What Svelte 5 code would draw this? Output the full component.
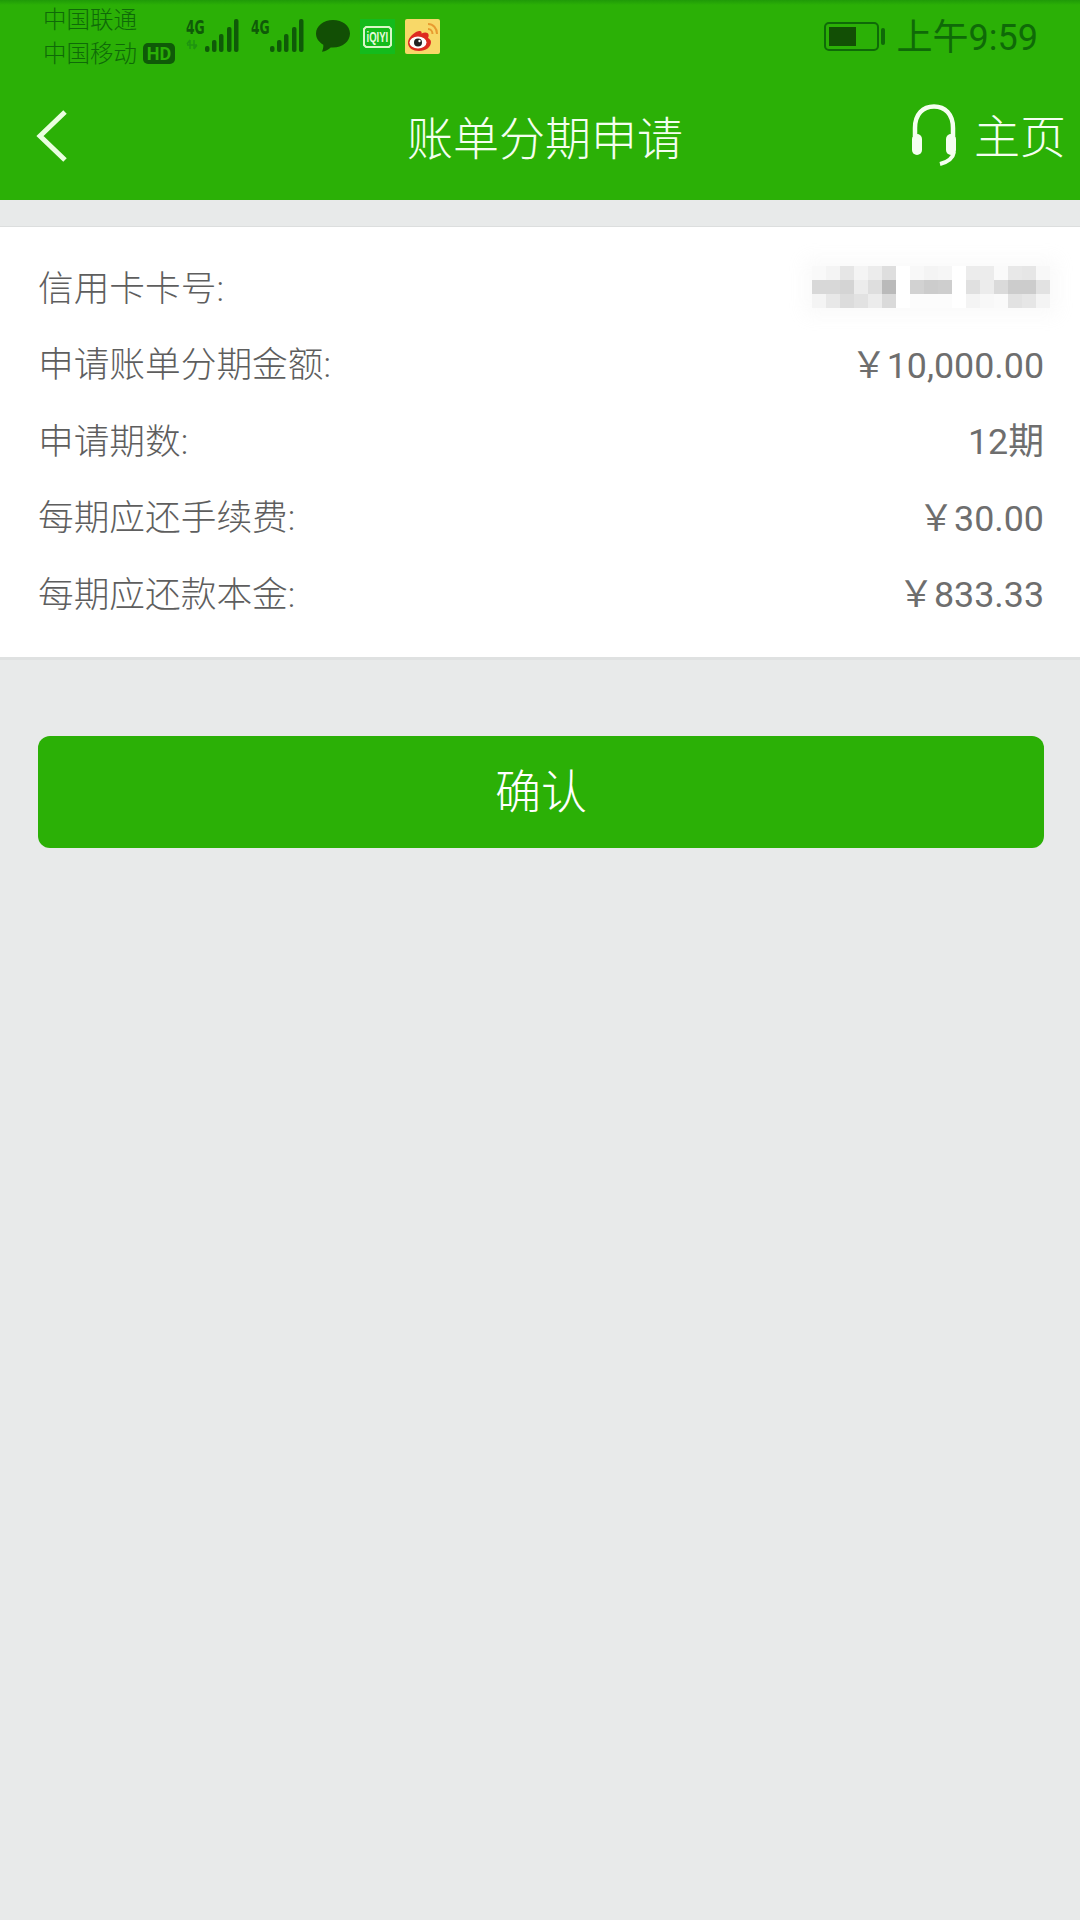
<script lang="ts">
  const rows = [
    { label: "申请账单分期金额:", value: "￥10,000.00" },
    { label: "申请期数:", value: "12期" },
    { label: "每期应还手续费:", value: "￥30.00" },
    { label: "每期应还款本金:", value: "￥833.33" },
  ];

  // pixelated card number, one list per block, grey levels per cell
  const blur = [
    [
      [249, 244, 230, 244, 236, 222],
      [216, 216, 212, 236, 222, 186],
      [244, 232, 220, 226, 236, 218],
    ],
    [
      [248, 244, 246],
      [210, 204, 206],
      [252, 252, 252],
    ],
    [
      [236, 236, 250, 232, 230, 248],
      [224, 236, 218, 204, 204, 226],
      [244, 248, 250, 226, 230, 244],
    ],
  ];
  const grey = (v: number) => `rgb(${v},${v},${v})`;

  // signal strength bars: x, top
  const bars = [
    [19, 28],
    [26, 22],
    [33, 16],
    [41, 9],
    [48, 1],
  ];
</script>

<div class="page">
  <header class="header">
    <div class="status">
      <div class="carriers">
        <span>中国联通</span>
        <span>中国移动</span>
      </div>
      <span class="hd">HD</span>
      <svg class="signal first" viewBox="0 0 54 36" width="54" height="36">
        <text transform="translate(0 16) scale(.72 1)" class="g4">4G</text>
        <path d="M1 27h10M4 22v9M8 22v9M4 22l-3 4M8 31l3-4" class="updown" />
        {#each bars as [x, top]}
          <rect {x} y={top} width="4.500" height={34 - top} rx="2" class="bar" />
        {/each}
      </svg>
      <svg class="signal second" viewBox="0 0 54 36" width="54" height="36">
        <text transform="translate(0 16) scale(.72 1)" class="g4">4G</text>
        {#each bars as [x, top]}
          <rect {x} y={top} width="4.500" height={34 - top} rx="2" class="bar" />
        {/each}
      </svg>
      <svg class="chat" viewBox="0 0 34 33" width="34" height="33">
        <path d="M17 0C7.600 0 0 5.900 0 13.500c0 4.700 2.900 8.800 7.300 11.200.3 2.600-.6 5.100-1.300 7 3.400-.4 6.500-2 8.700-4.300.8.100 1.500.1 2.300.1 9.400 0 17-6.100 17-14S26.400 0 17 0z" />
      </svg>
      <div class="app">
        <svg viewBox="0 0 35 35" width="35" height="35">
          <rect width="35" height="35" fill="#14bb1c" />
          <path d="M6 8h23l2 2v16l-2 2H6l-2-2V10z" fill="none" stroke="#d8f7c8" stroke-width="2" />
          <text transform="translate(6.500 23) scale(.68 1)" class="qiyi">iQIYI</text>
        </svg>
      </div>
      <div class="app">
        <svg viewBox="0 0 35 35" width="35" height="35">
          <rect width="35" height="35" rx="2" fill="#f8d868" />
          <path d="M11 13C6 16 3 20 3 24c0 5 5 8 11 8 7 0 12-4 12-9 0-2-2-3.500-3-4 1-2 1-4-.5-5-1.500-1-4-.5-6 .5.500-2-.5-3.500-5.500-1.500z" fill="#de2b20" />
          <ellipse cx="13" cy="23.500" rx="8.500" ry="6" fill="#fff" />
          <circle cx="13" cy="23.500" r="4" fill="#222" />
          <circle cx="14.500" cy="22" r="1.200" fill="#fff" />
          <path d="M23 5c5 0 9 4 9 10M23 10c2.500 0 4.500 2 4.500 5" fill="none" stroke="#e89a30" stroke-width="2" />
        </svg>
      </div>
      <div class="spacer"></div>
      <div class="battery">
        <div class="cell"><div class="level"></div></div>
        <div class="tip"></div>
      </div>
      <span class="time">上午9:59</span>
    </div>

    <nav class="nav">
      <svg class="back" viewBox="0 0 34 56" width="34" height="56">
        <path d="M30 4L5 28l25 24" />
      </svg>
      <h1>账单分期申请</h1>
      <div class="home">
        <svg viewBox="0 0 46 62" width="46" height="62">
          <path d="M4 32V24C4 10 12 2.500 23 2.500S42 10 42 24v8" class="band" />
          <rect x="1" y="30" width="10" height="21" rx="5" />
          <rect x="35" y="30" width="10" height="21" rx="5" />
          <path d="M43 48c-1 6-6 10-14 12" class="band mic" />
        </svg>
        <span>主页</span>
      </div>
    </nav>
  </header>

  <section class="card">
    <div class="row">
      <span>信用卡卡号:</span>
      <div class="mosaic">
        {#each blur as block}
          <div class="block">
            {#each block as line}
              <div class="line">
                {#each line as v}
                  <i style="background:{grey(v)}"></i>
                {/each}
              </div>
            {/each}
          </div>
        {/each}
      </div>
    </div>
    {#each rows as row}
      <div class="row">
        <span>{row.label}</span>
        <span class="value">{row.value}</span>
      </div>
    {/each}
  </section>

  <button class="confirm">确认</button>
</div>

<style>
  :global(body) {
    margin: 0;
    background: #e8eaea;
  }
  .page {
    height: 1920px;
    background: #e8eaea;
    font-family: Roboto, "Noto Sans CJK SC", sans-serif;
    font-weight: 300;
    overflow: hidden;
  }
  .header {
    height: 200px;
    background: #2bb006;
  }
  .status {
    height: 72px;
    display: flex;
    align-items: center;
    padding: 0 42px 0 43px;
    color: #0f6a08;
    background: linear-gradient(#1f9a08, #2bb006 5px);
  }
  .carriers {
    display: flex;
    flex-direction: column;
    font-size: 23.500px;
    line-height: 34px;
    padding-top: 2px;
  }
  .hd {
    align-self: flex-end;
    margin: 0 0 8px 6px;
    width: 32px;
    height: 21px;
    border-radius: 5px;
    background: #0f5a08;
    color: #2bb006;
    font-size: 18px;
    line-height: 21px;
    font-weight: 700;
    text-align: center;
  }
  .signal {
    flex: none;
  }
  .first {
    margin-left: 11px;
  }
  .second {
    margin-left: 11px;
  }
  .g4 {
    font: 700 19px "DejaVu Sans Condensed", "DejaVu Sans", sans-serif;
    fill: #0f5a08;
  }
  .updown {
    fill: none;
    stroke: #1f9410;
    stroke-width: 1.500;
  }
  .bar {
    fill: #0f5a08;
  }
  .chat {
    margin-left: 11px;
    fill: #124f05;
    flex: none;
  }
  .app {
    margin-left: 10px;
    width: 35px;
    height: 35px;
    flex: none;
    display: flex;
  }
  .qiyi {
    font: 700 14px "Liberation Sans", sans-serif;
    fill: #e6fadc;
  }
  .spacer {
    flex: 1;
  }
  .battery {
    display: flex;
    align-items: center;
    gap: 2px;
    margin-right: 12px;
  }
  .cell {
    box-sizing: border-box;
    width: 55px;
    height: 29px;
    border: 2px solid #0f6a08;
    border-radius: 5px;
    padding: 3px;
  }
  .level {
    width: 27px;
    height: 100%;
    background: #124f05;
  }
  .tip {
    width: 4px;
    height: 17px;
    border-radius: 2px;
    background: #0f6a08;
  }
  .time {
    font-size: 36px;
    line-height: 40px;
    margin-top: 3px;
    font-weight: 400;
  }
  .nav {
    height: 128px;
    position: relative;
    display: flex;
    align-items: center;
    justify-content: space-between;
    padding: 0 14px 0 35px;
    color: #f4fff0;
  }
  .back {
    fill: none;
    stroke: #eaffe0;
    stroke-width: 5;
  }
  .nav h1 {
    margin: 0;
    position: absolute;
    left: 0;
    right: 0;
    top: 38px;
    text-align: center;
    font-size: 46px;
    line-height: 58px;
    font-weight: 300;
    transform: translateX(5px);
  }
  .home {
    display: flex;
    align-items: center;
    gap: 15px;
    font-size: 46px;
    line-height: 56px;
  }
  .home span {
    margin-top: 2px;
  }
  .home svg {
    fill: #f5fff0;
    margin: -2px 2px 0 -2px;
  }
  .band {
    fill: none;
    stroke: #f5fff0;
    stroke-width: 4.500;
  }
  .mic {
    stroke-width: 4;
  }
  .card {
    margin-top: 26px;
    height: 434px;
    box-sizing: border-box;
    padding-top: 20px;
    background: #fff;
    border-top: 1px solid #dcdede;
    border-bottom: 3px solid #dfe1e1;
  }
  .row {
    height: 76.500px;
    display: flex;
    align-items: center;
    justify-content: space-between;
    padding: 0 36px 0 38px;
    font-size: 35.700px;
    color: #5e5e5e;
  }
  .value {
    font-size: 35.800px;
    font-weight: 400;
    color: #6e6e6e;
  }
  .mosaic {
    display: flex;
    gap: 14px;
    margin: 3px -6px 0 0;
    box-shadow: 0 0 16px 8px rgba(250, 250, 250, 0.9);
  }
  .line {
    display: flex;
  }
  .line i {
    width: 14px;
    height: 14px;
  }
  .confirm {
    display: block;
    box-sizing: border-box;
    width: 1006px;
    height: 112px;
    margin: 76px 0 0 38px;
    padding: 0 0 8px;
    border: 0;
    border-radius: 12px;
    background: #2bb006;
    color: #fff;
    font: inherit;
    font-size: 46px;
  }
</style>
